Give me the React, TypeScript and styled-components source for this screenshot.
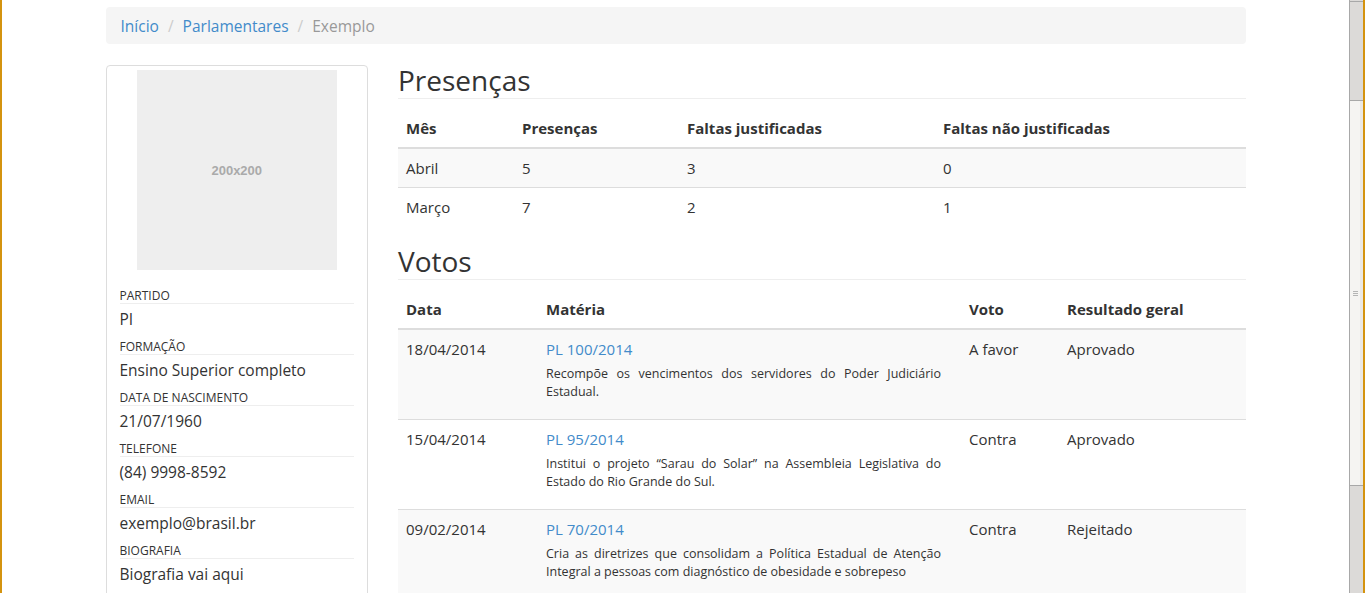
import React from "react";
import styled, { createGlobalStyle } from "styled-components";

const GlobalStyle = createGlobalStyle`
  html, body { margin: 0; padding: 0; overflow: hidden; }
  body {
    font-family: "Open Sans", "Noto Sans", sans-serif;
    color: #333;
    background: #fff;
  }
  * { box-sizing: border-box; }
`;

const Frame = styled.div`
  display: flex;
  height: 593px;
  border-left: 2px solid #d4930f;
  border-right: 2px solid #d4930f;
  overflow: hidden;
`;

const Main = styled.main`
  flex: 1;
  min-width: 0;
  padding-top: 7px;
`;

const Container = styled.div`
  width: 1170px;
  margin: 0 auto;
  padding: 0 15px;
`;

const Breadcrumb = styled.ol`
  display: flex;
  list-style: none;
  margin: 0 0 21px;
  padding: 9px 15px 7px;
  background: #f5f5f5;
  border-radius: 4px;
  font-size: 15.5px;
  line-height: 21px;

  & > li + li::before {
    content: "/";
    color: #ccc;
    padding: 0 9px;
  }
`;

const Crumb = styled.li<{ $active?: boolean }>`
  color: ${(p) => (p.$active ? "#999" : "#428bca")};
`;

const Row = styled.div`
  display: flex;
  margin: 0 -15px;
`;

const Col = styled.div<{ $span: number }>`
  width: ${(p) => (p.$span / 12) * 100}%;
  padding: 0 15px;
`;

const Panel = styled.div`
  border: 1px solid #ddd;
  border-radius: 4px;
  padding: 4px 13px 15px;
`;

const Placeholder = styled.div`
  width: 200px;
  height: 200px;
  margin: 0 auto;
  background: #eee;
  color: #aaa;
  display: flex;
  align-items: center;
  justify-content: center;
  font-family: "Liberation Sans", Arial, sans-serif;
  font-weight: bold;
  font-size: 13px;
`;

const InfoList = styled.dl`
  margin: 18px 0 0;
`;

const InfoLabel = styled.dt`
  font-size: 12px;
  line-height: 14px;
  padding-top: 1px;
  text-transform: uppercase;
  border-bottom: 1px solid #eee;
`;

const InfoValue = styled.dd`
  margin: 4px 0 9px;
  font-size: 15.5px;
  line-height: 22px;
`;

const SectionTitle = styled.h2`
  margin: 0;
  padding-bottom: 2px;
  font-size: 28px;
  font-weight: 400;
  line-height: 31px;
  border-bottom: 1px solid #eee;
`;

const Table = styled.table`
  width: 100%;
  table-layout: fixed;
  border-collapse: collapse;
  margin: 10px 0 20px;
  font-size: 15px;
  line-height: 22px;
`;

const Th = styled.th<{ $w: number }>`
  width: ${(p) => p.$w}px;
  text-align: left;
  font-weight: 700;
  padding: 8px;
  vertical-align: bottom;
  border-bottom: 2px solid #ddd;
`;

const Tr = styled.tr`
  &:nth-child(odd) { background: #f9f9f9; }
`;

const Td = styled.td`
  padding: 8px;
  vertical-align: top;
  border-top: 1px solid #ddd;
`;

const Link = styled.a`
  color: #428bca;
  text-decoration: none;
`;

const Description = styled.p`
  margin: 5px 12px 10px 0;
  font-size: 12.5px;
  line-height: 18px;
  text-align: justify;
`;

const Scrollbar = styled.div`
  width: 14px;
  flex: none;
  display: flex;
  flex-direction: column;
  background: #dcdad8;
  border-left: 1px solid #a8a8a8;
`;

const TrackTop = styled.div`
  height: 99px;
  border-top: 1px solid #a8a8a8;
  margin-top: 1px;
`;

const Thumb = styled.div`
  height: 386px;
  display: flex;
  align-items: center;
  justify-content: center;
  background: linear-gradient(to right, #f5f4f2 0, #f5f4f2 75%, #eae8e5 75%);
  border-top: 1px solid #a8a8a8;
  border-bottom: 1px solid #a8a8a8;
`;

const Grip = styled.div`
  width: 5px;
  height: 5px;
  margin-right: 3px;
  border-top: 1px solid #b5b5b5;
  border-bottom: 1px solid #b5b5b5;
  position: relative;
  &::after {
    content: "";
    position: absolute;
    left: 0;
    right: 0;
    top: 1px;
    border-top: 1px solid #b5b5b5;
  }
`;

const info = [
  ["Partido", "PI"],
  ["Formação", "Ensino Superior completo"],
  ["Data de nascimento", "21/07/1960"],
  ["Telefone", "(84) 9998-8592"],
  ["Email", "exemplo@brasil.br"],
  ["Biografia", "Biografia vai aqui"],
];

const presencas = [
  ["Abril", "5", "3", "0"],
  ["Março", "7", "2", "1"],
];

const votos = [
  {
    data: "18/04/2014",
    pl: "PL 100/2014",
    desc: "Recompõe os vencimentos dos servidores do Poder Judiciário Estadual.",
    voto: "A favor",
    resultado: "Aprovado",
  },
  {
    data: "15/04/2014",
    pl: "PL 95/2014",
    desc: "Institui o projeto “Sarau do Solar” na Assembleia Legislativa do Estado do Rio Grande do Sul.",
    voto: "Contra",
    resultado: "Aprovado",
  },
  {
    data: "09/02/2014",
    pl: "PL 70/2014",
    desc: "Cria as diretrizes que consolidam a Política Estadual de Atenção Integral a pessoas com diagnóstico de obesidade e sobrepeso",
    voto: "Contra",
    resultado: "Rejeitado",
  },
];

export default function App() {
  return (
    <>
      <GlobalStyle />
      <Frame>
        <Main>
          <Container>
            <Breadcrumb>
              <Crumb>Início</Crumb>
              <Crumb>Parlamentares</Crumb>
              <Crumb $active>Exemplo</Crumb>
            </Breadcrumb>
            <Row>
              <Col $span={3}>
                <Panel>
                  <Placeholder>200x200</Placeholder>
                  <InfoList>
                    {info.map(([k, v]) => (
                      <React.Fragment key={k}>
                        <InfoLabel>{k}</InfoLabel>
                        <InfoValue>{v}</InfoValue>
                      </React.Fragment>
                    ))}
                  </InfoList>
                </Panel>
              </Col>
              <Col $span={9}>
                <SectionTitle>Presenças</SectionTitle>
                <Table>
                  <thead>
                    <tr>
                      <Th $w={116}>Mês</Th>
                      <Th $w={165}>Presenças</Th>
                      <Th $w={256}>Faltas justificadas</Th>
                      <Th $w={311}>Faltas não justificadas</Th>
                    </tr>
                  </thead>
                  <tbody>
                    {presencas.map((r) => (
                      <Tr key={r[0]}>
                        {r.map((c, i) => (
                          <Td key={i}>{c}</Td>
                        ))}
                      </Tr>
                    ))}
                  </tbody>
                </Table>
                <SectionTitle>Votos</SectionTitle>
                <Table>
                  <thead>
                    <tr>
                      <Th $w={140}>Data</Th>
                      <Th $w={423}>Matéria</Th>
                      <Th $w={98}>Voto</Th>
                      <Th $w={187}>Resultado geral</Th>
                    </tr>
                  </thead>
                  <tbody>
                    {votos.map((v) => (
                      <Tr key={v.pl}>
                        <Td>{v.data}</Td>
                        <Td>
                          <Link href="#">{v.pl}</Link>
                          <Description>{v.desc}</Description>
                        </Td>
                        <Td>{v.voto}</Td>
                        <Td>{v.resultado}</Td>
                      </Tr>
                    ))}
                  </tbody>
                </Table>
              </Col>
            </Row>
          </Container>
        </Main>
        <Scrollbar>
          <TrackTop />
          <Thumb>
            <Grip />
          </Thumb>
        </Scrollbar>
      </Frame>
    </>
  );
}
